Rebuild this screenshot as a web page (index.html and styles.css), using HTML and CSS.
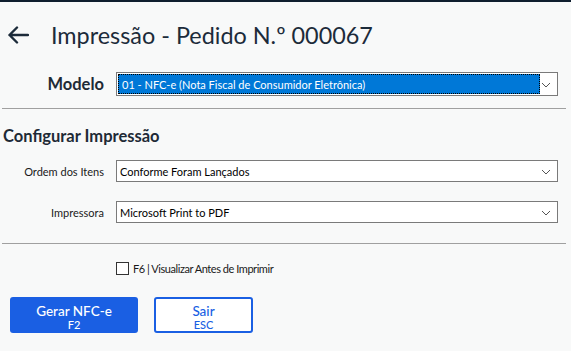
FILE: index.html
```html
<!DOCTYPE html>
<html lang="pt-BR">
<head>
<meta charset="utf-8">
<title>Impressão</title>
<link rel="stylesheet" href="styles.css">
</head>
<body>
<div class="page">
  <header class="header">
    <svg class="back" width="22" height="18" viewBox="0 0 22 18"><path d="M10 1.5 L2.5 9 L10 16.5 M2.5 9 H21" fill="none" stroke="#1c2b3a" stroke-width="2.4" stroke-linecap="round" stroke-linejoin="round"/></svg>
    <h1 class="title">Impressão - Pedido N.º 000067</h1>
  </header>

  <div class="row row-model">
    <label class="label-big">Modelo</label>
    <div class="select select-model">
      <span class="sel-highlight">01 - NFC-e (Nota Fiscal de Consumidor Eletrônica)</span>
      <svg class="chev" width="10" height="6" viewBox="0 0 10 6"><path d="M1 1 L5 5 L9 1" fill="none" stroke="#555" stroke-width="1"/></svg>
    </div>
  </div>

  <hr class="sep sep1">

  <h2 class="section">Configurar Impressão</h2>

  <div class="row row-small row-ordem">
    <label class="label-small">Ordem dos Itens</label>
    <div class="select">
      <span class="sel-text">Conforme Foram Lançados</span>
      <svg class="chev" width="10" height="6" viewBox="0 0 10 6"><path d="M1 1 L5 5 L9 1" fill="none" stroke="#555" stroke-width="1"/></svg>
    </div>
  </div>

  <div class="row row-small row-imp">
    <label class="label-small">Impressora</label>
    <div class="select">
      <span class="sel-text">Microsoft Print to PDF</span>
      <svg class="chev" width="10" height="6" viewBox="0 0 10 6"><path d="M1 1 L5 5 L9 1" fill="none" stroke="#555" stroke-width="1"/></svg>
    </div>
  </div>

  <hr class="sep sep2">

  <div class="check-row">
    <span class="checkbox"></span>
    <span class="check-text">F6 | Visualizar Antes de Imprimir</span>
  </div>

  <div class="buttons">
    <button class="btn btn-primary"><span class="btn-main">Gerar NFC-e</span><span class="btn-key">F2</span></button>
    <button class="btn btn-outline"><span class="btn-main">Sair</span><span class="btn-key">ESC</span></button>
  </div>
</div>
</body>
</html>
```

FILE: styles.css
```css
* { box-sizing: border-box; }
html, body { margin: 0; padding: 0; }
body {
  background: #f8f9f9;
  font-family: Lato, "Open Sans", sans-serif;
  color: #1c2b3a;
  width: 571px;
  height: 351px;
  overflow: hidden;
}
.page {
  border-top: 2px solid #0f1e2e;
  display: flex;
  flex-direction: column;
}
.header {
  display: flex;
  align-items: center;
  height: 68px;
  padding-left: 7px;
  padding-bottom: 2px;
}
.back { flex: none; }
.title {
  margin: 0 0 0 22px;
  font-weight: 400;
  font-size: 23.4px;
  color: #1c2b3a;
}
.row {
  display: flex;
  align-items: center;
}
.row-model { height: 24px; margin-top: 2px; }
.label-big {
  width: 104px;
  text-align: right;
  font-weight: 700;
  font-size: 16.5px;
  color: #1e2a36;
}
.select {
  margin-left: 12px;
  width: 442px;
  height: 22px;
  background: #fff;
  border: 1px solid #7a7a7a;
  display: flex;
  align-items: center;
  position: relative;
  font-size: 11px;
  color: #000;
}
.select-model { height: 24px; }
.sel-highlight {
  margin-left: 1px;
  width: 422px;
  height: 20px;
  background: #0078d7;
  color: #fff;
  border: 1px dotted #f0a030;
  outline: 1px dotted #000;
  outline-offset: -1px;
  display: flex;
  align-items: center;
  padding-left: 3px;
}
.sel-text { padding-left: 3px; }
.chev {
  position: absolute;
  right: 6px;
  top: 50%;
  margin-top: -2px;
}
.sep {
  border: 0;
  border-top: 1px solid #a0a0a0;
  margin: 0 5px 0 2px;
  height: 0;
}
.sep1 { margin-top: 12px; }
.section {
  margin: 17px 0 0 3px;
  font-weight: 700;
  font-size: 16.5px;
  color: #1e2a36;
  line-height: 20px;
}
.row-small { height: 22px; }
.row-ordem { margin-top: 14px; }
.row-imp { margin-top: 19px; }
.label-small {
  width: 104px;
  text-align: right;
  font-size: 11px;
  color: #1a1a1a;
}
.sep2 { margin-top: 20px; }
.check-row {
  display: flex;
  align-items: center;
  margin: 17px 0 0 116px;
  height: 14px;
}
.checkbox {
  width: 13px;
  height: 13px;
  border: 1px solid #333;
  background: #fff;
}
.check-text {
  margin-left: 4px;
  font-size: 11px;
  letter-spacing: -0.45px;
  color: #1a1a1a;
}
.buttons {
  display: flex;
  margin: 22px 0 0 10px;
  gap: 16px;
}
.btn {
  height: 36px;
  border-radius: 3px;
  font-family: Lato, "Open Sans", sans-serif;
  display: flex;
  flex-direction: column;
  align-items: center;
  justify-content: center;
  padding: 3px 0 0 0;
  cursor: pointer;
}
.btn-primary {
  width: 128px;
  background: #1a5fe3;
  border: 0;
  color: #fff;
}
.btn-outline {
  width: 99px;
  background: #fff;
  border: 2px solid #1a5fe3;
  color: #1a5fe3;
}
.btn-main { font-size: 13.5px; line-height: 15px; font-weight: 500; }
.btn-key { font-size: 11px; line-height: 11px; font-weight: 500; }
```
